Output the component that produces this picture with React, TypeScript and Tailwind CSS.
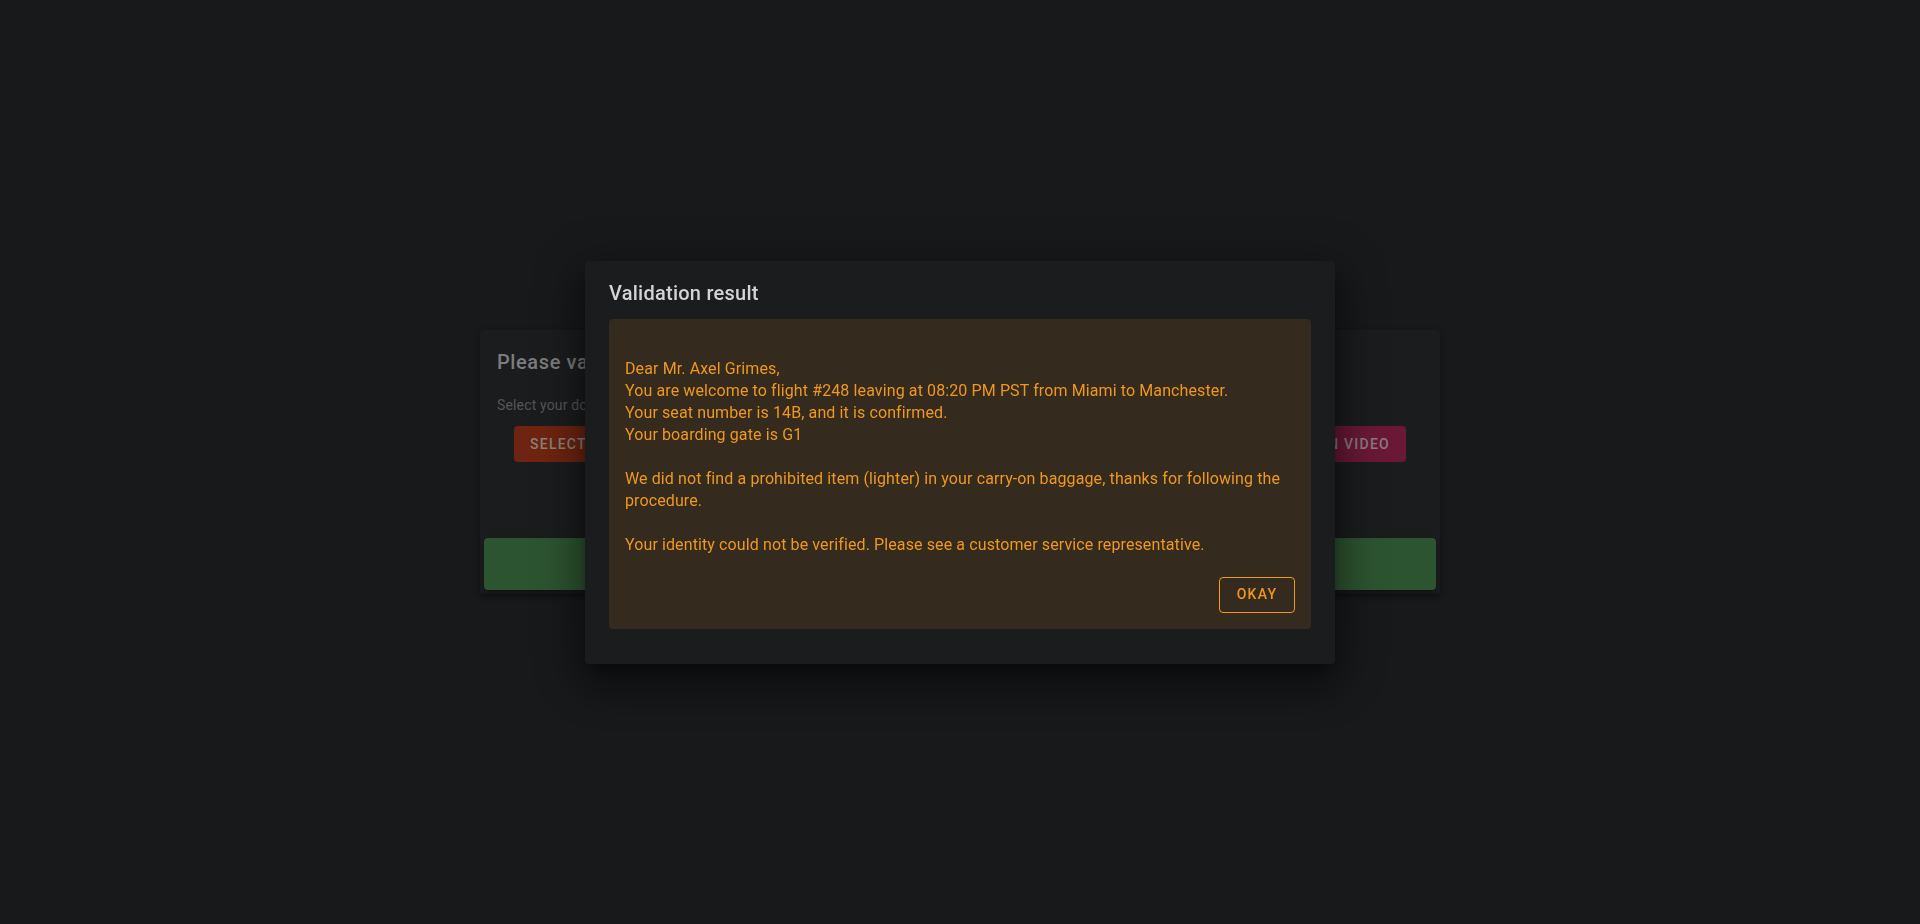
import React from 'react';

const font = { fontFamily: 'Roboto, "Liberation Sans", sans-serif' };

function BackgroundCard() {
  return (
    <div className="mx-auto w-[960px] rounded bg-[#1b1c1e] shadow-[0_2px_6px_rgba(0,0,0,0.35)] pb-1">
      <div className="px-[17px] pt-4">
        <h2 className="text-[20px] leading-[32px] font-medium tracking-[0.6px] text-[#7c7c7c]">
          Please validate your travel documents
        </h2>
        <p className="mt-[17px] text-[14px] leading-5 tracking-[0.15px] text-[#555658]">
          Select your documents and upload the required baggage scan video
        </p>
      </div>
      <div className="mt-[11px] flex justify-between px-[34px]">
        <button className="h-9 w-[220px] rounded bg-[#6e2410] px-4 text-left text-[14px] font-medium tracking-[1.25px] text-[#8c817c] uppercase">
          Select documents
        </button>
        <button className="h-9 w-[240px] rounded bg-[#6a1836] px-4 text-right text-[14px] font-medium tracking-[1.25px] text-[#8a7b80] uppercase">
          Upload scan video
        </button>
      </div>
      <div className="mx-1 mt-[76px] flex h-[52px] items-center justify-center rounded bg-[#2d5430] text-[15px] font-medium tracking-[1.25px] text-[#8fa391] uppercase shadow-[0_3px_6px_rgba(0,0,0,0.4)]">
        Validate
      </div>
    </div>
  );
}

function ValidationDialog() {
  const lines: (string | null)[] = [
    null,
    'Dear Mr. Axel Grimes,',
    'You are welcome to flight #248 leaving at 08:20 PM PST from Miami to Manchester.',
    'Your seat number is 14B, and it is confirmed.',
    'Your boarding gate is G1',
    null,
    'We did not find a prohibited item (lighter) in your carry-on baggage, thanks for following the',
    'procedure.',
    null,
    'Your identity could not be verified. Please see a customer service representative.',
  ];

  return (
    <div className="fixed inset-0 flex items-center justify-center">
      <div className="w-[750px] rounded bg-[#1b1c1e] px-6 pt-4 pb-[35px] shadow-[0_11px_15px_-7px_rgba(0,0,0,0.45),0_24px_38px_3px_rgba(0,0,0,0.3),0_9px_46px_8px_rgba(0,0,0,0.25)]">
        <h2 className="text-[20px] leading-[32px] font-medium tracking-[0.25px] text-[#d4d4d5]">Validation result</h2>
        <div className="mt-[10px] rounded bg-[#342a1d] px-4 pt-[17px] pb-4 text-[#f0981f]">
          <div className="text-[16px] leading-[22px] tracking-[0.11px] whitespace-nowrap">
            {lines.map((l, i) =>
              l === null ? <div key={i} className="h-[22px]" /> : <div key={i}>{l}</div>
            )}
          </div>
          <div className="mt-[21px] flex justify-end">
            <button className="flex h-9 w-[76px] items-center justify-center rounded border border-[#f0981f] text-[14px] font-medium tracking-[1.25px] text-[#f0981f] uppercase">
              Okay
            </button>
          </div>
        </div>
      </div>
    </div>
  );
}

export default function App() {
  return (
    <div className="relative h-[924px] w-full overflow-hidden bg-[#18191b] pt-[330px]" style={font}>
      <BackgroundCard />
      <ValidationDialog />
    </div>
  );
}
